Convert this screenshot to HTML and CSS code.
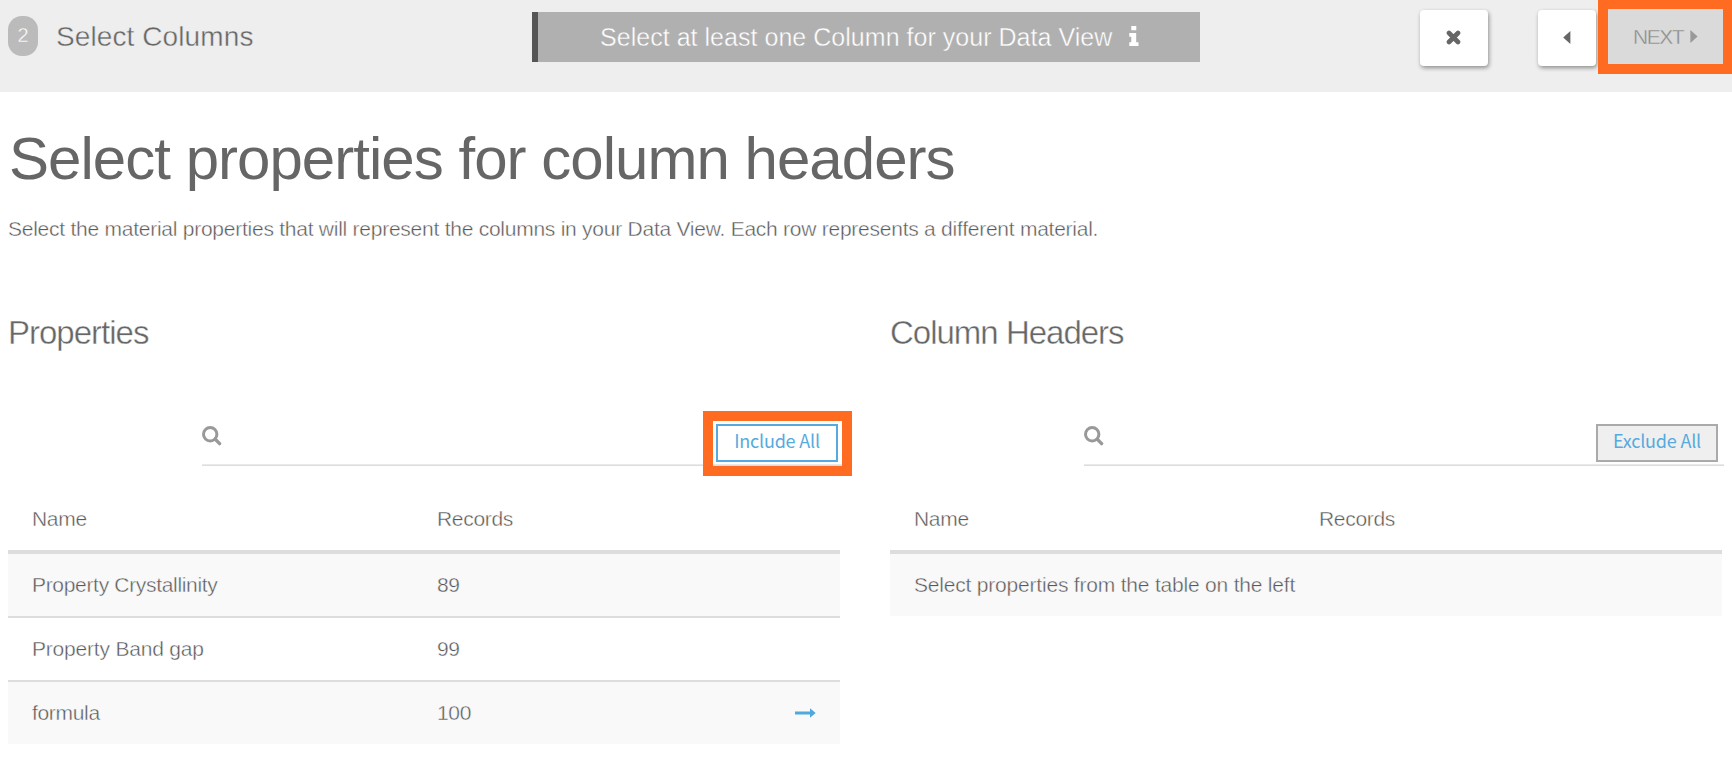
FILE: index.html
```html
<!DOCTYPE html>
<html lang="en">
<head>
<meta charset="utf-8">
<title>Select Columns</title>
<link rel="stylesheet" href="styles.css">
</head>
<body>
<header class="topbar">
  <span class="step">2</span>
  <span class="step-title">Select Columns</span>
  <div class="notice">
    <span class="notice-text">Select at least one Column for your Data View</span>
    <svg class="info" viewBox="0 0 10 20"><path d="M2.300 0h5v4.200h-5zM.3 7h6.900v9.300h2.300V20H.3v-3.700h2v-5.600h-2z" fill="#fff"/></svg>
  </div>
  <button class="btn btn-close" aria-label="Close"><svg width="15" height="15" viewBox="0 0 15 15"><path d="M3 3l9 9M12 3l-9 9" stroke="#666" stroke-width="4.600" stroke-linecap="round"/></svg></button>
  <button class="btn btn-back" aria-label="Back"><svg width="8" height="13" viewBox="0 0 8 13"><path d="M7.400 0v13L.2 6.500z" fill="#666"/></svg></button>
  <div class="next-frame"><button class="next"><span>NEXT</span><svg width="8" height="13" viewBox="0 0 8 13"><path d="M.4 0v13l7.200-6.500z" fill="#999"/></svg></button></div>
</header>
<main class="page">
  <h1 class="heading">Select properties for column headers</h1>
  <p class="lead">Select the material properties that will represent the columns in your Data View. Each row represents a different material.</p>
  <div class="panels">
    <section class="panel">
      <h2 class="panel-title">Properties</h2>
      <div class="search">
        <svg class="glass" viewBox="0 0 20 20"><circle cx="8.200" cy="8.200" r="6.700" fill="none" stroke="#999" stroke-width="3"/><path d="M13.300 13.300l4.300 4.300" stroke="#999" stroke-width="3.400" stroke-linecap="round"/></svg>
        <button class="all include">Include All</button>
        <div class="marker"></div>
      </div>
      <div class="table">
        <div class="row head"><span class="name">Name</span><span class="records">Records</span></div>
        <div class="row odd"><span class="name">Property Crystallinity</span><span class="records">89</span></div>
        <div class="row"><span class="name loose">Property Band gap</span><span class="records">99</span></div>
        <div class="row odd"><span class="name">formula</span><span class="records">100</span><svg class="arrow" viewBox="0 0 21 10"><path d="M0 3.500h15V.3L20.700 5 15 9.700v-3.200H0z" fill="#4fa9de"/></svg></div>
      </div>
    </section>
    <section class="panel">
      <h2 class="panel-title">Column Headers</h2>
      <div class="search">
        <svg class="glass" viewBox="0 0 20 20"><circle cx="8.200" cy="8.200" r="6.700" fill="none" stroke="#999" stroke-width="3"/><path d="M13.300 13.300l4.300 4.300" stroke="#999" stroke-width="3.400" stroke-linecap="round"/></svg>
        <button class="all exclude">Exclude All</button>
      </div>
      <div class="table">
        <div class="row head"><span class="name">Name</span><span class="records">Records</span></div>
        <div class="row odd loose">Select properties from the table on the left</div>
      </div>
    </section>
  </div>
</main>
</body>
</html>
```
FILE: styles.css
```css
* { box-sizing: border-box; }
body {
  margin: 0;
  background: #fff;
  color: #666;
  font-family: "Liberation Sans", Arial, sans-serif;
  font-size: 21px;
}
button { font: inherit; border: 0; padding: 0; }
svg { display: block; flex: none; }

/* Light text: a hairline in the surface colour slims each stroke. */
.step, .step-title, .notice-text, .next, .lead, .panel-title, .row {
  -webkit-text-stroke: .4px var(--surface, #fff);
}
.lead, .row { color: #595959; }

.topbar {
  --surface: #eee;
  display: flex;
  align-items: flex-start;
  height: 92px;
  padding-left: 8px;
  background: var(--surface);
}
.step {
  --surface: #bbb;
  width: 30px;
  height: 40px;
  margin-top: 16px;
  border-radius: 14px;
  background: var(--surface);
  color: #fff;
  font-size: 20px;
  line-height: 39px;
  text-align: center;
}
.step-title {
  width: 494px;
  padding-left: 18px;
  margin-top: 17px;
  font-size: 28px;
  letter-spacing: .1px;
  line-height: 40px;
  white-space: nowrap;
}
.notice {
  --surface: #b0b0b0;
  display: flex;
  width: 668px;
  height: 50px;
  margin-top: 12px;
  padding-left: 62px;
  border-left: 6px solid #555;
  background: var(--surface);
  color: #fff;
  font-size: 25px;
  letter-spacing: .03px;
  line-height: 50px;
  white-space: nowrap;
}
.notice-text { width: 529px; }
.info { width: 10px; height: 20px; margin-top: 14px; }
.btn {
  display: flex;
  align-items: center;
  justify-content: center;
  height: 56px;
  margin-top: 10px;
  border-radius: 4px;
  background: #fff;
  box-shadow: 1px 2px 4px rgba(0, 0, 0, .4);
}
.btn-close { width: 68px; margin-left: 220px; padding-right: 2px; }
.btn-back { width: 58px; margin-left: 50px; }
.btn svg { margin-bottom: 2px; }
.next-frame {
  width: 134px;
  height: 74px;
  margin-left: 2px;
  padding: 9px 9px 10px 10px;
  background: #ff6b21;
}
.next {
  --surface: #dadada;
  display: flex;
  align-items: center;
  width: 115px;
  height: 55px;
  padding-left: 25px;
  background: var(--surface);
  color: #8c8c8c;
  letter-spacing: -1.500px;
  line-height: 55px;
}
.next span { width: 57px; text-align: left; }

.page { padding: 0 8px; }
.heading {
  margin: 0;
  padding: 32px 0 0 1px;
  font-size: 60px;
  font-weight: 400;
  letter-spacing: -.97px;
  line-height: 70px;
  white-space: nowrap;
}
.lead { margin: 20px 0 0; letter-spacing: -.25px; line-height: 30px; white-space: nowrap; }
.panels { display: flex; gap: 50px; margin-top: 69px; }
.panel { width: 832px; }
.panel-title {
  margin: 0;
  font-size: 33px;
  font-weight: 400;
  letter-spacing: -1px;
  line-height: 40px;
}
.search {
  position: relative;
  display: flex;
  justify-content: space-between;
  width: 640px;
  height: 56px;
  margin: 57px 0 0 194px;
  border-bottom: 1px solid #ddd;
  box-shadow: inset 0 -1px #eaeaea;
}
.glass { width: 20px; height: 20px; margin-top: 16px; }
.all {
  width: 122px;
  height: 38px;
  margin: 14px 4px 0 0;
  padding-bottom: 5px;
  border: 2px solid #56aadd;
  background: #fff;
  color: #56aadd;
  font-family: "Noto Sans CJK SC", sans-serif;
  font-size: 18px;
  letter-spacing: -.2px;
  line-height: 29px;
}
.exclude { margin-right: 6px; border-color: #aaa; background: #efefef; }
.marker {
  position: absolute;
  top: 1px;
  right: -10px;
  width: 149px;
  height: 65px;
  border: 10px solid #ff6b21;
}
.row {
  display: flex;
  height: 64px;
  padding-left: 24px;
  border-bottom: 2px solid #ddd;
  letter-spacing: -.32px;
  line-height: 62px;
  white-space: nowrap;
}
.row:last-child { height: 62px; border-bottom: 0; }
.row.head { height: 88px; padding-top: 22px; border-bottom: 4px solid #ddd; }
.odd { --surface: #f9f9f9; background: var(--surface); }
.name { width: 405px; }
.records { width: 358px; }
.loose { letter-spacing: -.2px; }
.arrow { width: 21px; height: 10px; margin-top: 26px; }
```
